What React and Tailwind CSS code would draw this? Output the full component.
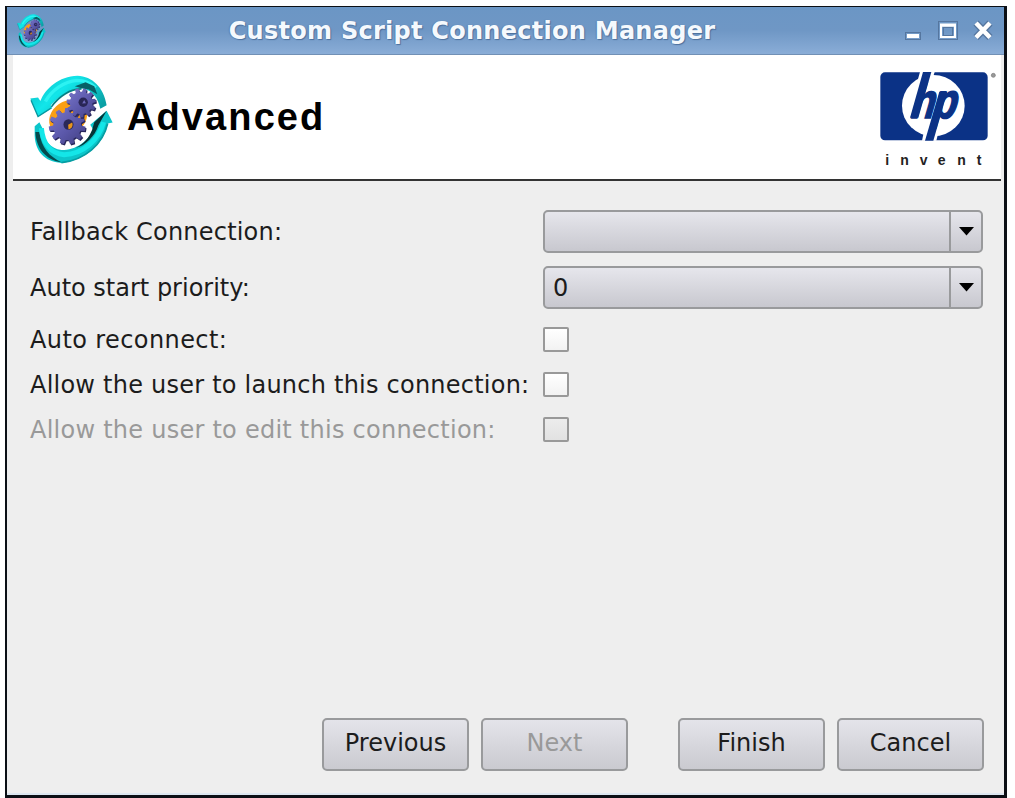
import { useState } from 'react';

const TEETH = 11;

// Outline of a cog wheel: every tooth takes four points on two radii
const gearPoints = (cx, cy, outer, inner, turn) => {
    const points = [];
    for (let i = 0; i < TEETH; i++) {
        [[-0.33, inner], [-0.2, outer], [0.2, outer], [0.33, inner]].forEach(([offset, radius]) => {
            const angle = ((i + offset) / TEETH) * Math.PI * 2 + turn;
            points.push(`${(cx + radius * Math.cos(angle)).toFixed(1)},${(cy + radius * Math.sin(angle)).toFixed(1)}`);
        });
    }
    return points.join(' ');
};

const GearsIcon = ({ className, prefix }) => (
    <svg className={className} viewBox="46 42 248 268" preserveAspectRatio="none" aria-hidden="true">
        <defs>
            <linearGradient id={`${prefix}-top`} x1="0" y1="0" x2="1" y2="0.6">
                <stop offset="0" stopColor="#08b4bc" />
                <stop offset="0.45" stopColor="#12e6ea" />
                <stop offset="0.75" stopColor="#0cc4c8" />
                <stop offset="1" stopColor="#0aa0a5" />
            </linearGradient>
            <linearGradient id={`${prefix}-gear`} x1="0" y1="0" x2="1" y2="1">
                <stop offset="0" stopColor="#7a78cc" />
                <stop offset="0.55" stopColor="#5b58aa" />
                <stop offset="1" stopColor="#413f80" />
            </linearGradient>
        </defs>

        {/* Upper arrow */}
        <path d="M47 113 L70 110 L77 120 C92 82 132 46 188 44 C232 46 266 78 275 133 L256 144 C250 112 232 90 204 82 C160 82 124 116 108 134 L112 141 L70 168 Z" fill={`url(#${prefix}-top)`} />
        <path d="M92 122 C110 88 148 61 186 58 C212 58 230 68 242 80" fill="none" stroke="#2df2f2" strokeWidth="10" />
        <path d="M110 138 C132 106 166 84 200 84" fill="none" stroke="#067f84" strokeWidth="5" />
        <path d="M180 76 L212 64 L238 76 L247 100 L222 86 L200 82 Z" fill="#076066" />
        <path d="M49 118 L70 167 L110 141" fill="none" stroke="#0897a0" strokeWidth="4" />

        {/* Lower arrow */}
        <path d="M60 196 L74 184 L84 204 C86 240 108 264 140 268 C184 268 222 240 234 205 L226 192 L275 150 L293 185 L278 188 C272 234 224 298 140 307 C88 304 62 270 60 226 Z" fill="#0cc5ca" />
        <path d="M62 214 C64 262 92 298 140 305 C104 288 80 262 74 214 Z" fill="#044a4d" />
        <path d="M80 202 C84 248 108 278 148 282 C204 280 250 240 266 184" fill="none" stroke="#14e6e8" strokeWidth="15" />
        <path d="M275 150 L238 184 L232 206 C222 232 206 250 182 262 C212 254 240 226 250 194 Z" fill="#053437" />
        <path d="M278 188 C264 250 210 298 140 306" fill="none" stroke="#079da2" strokeWidth="5" />

        <ellipse cx="160" cy="170" rx="60" ry="49" transform="rotate(-34 160 170)" fill="#fb9f14" />
        <polygon points={gearPoints(160, 200, 55, 42, 0.15)} fill="#29275c" />
        <polygon points={gearPoints(157, 196, 55, 42, 0.15)} fill={`url(#${prefix}-gear)`} />
        <ellipse cx="161" cy="191" rx="15" ry="16" fill="#2b2858" />
        <path d="M160 192 L172 185 C176 195 170 205 161 205 Z" fill="#e8951c" />
        <polygon points={gearPoints(202, 130, 44, 34, 0.4)} fill="#29275c" />
        <polygon points={gearPoints(199, 126, 44, 34, 0.4)} fill={`url(#${prefix}-gear)`} />
        <circle cx="205" cy="124" r="14" fill="#292656" />
        <path d="M202 128 L208 117 L213 127 Z" fill="#6e6abc" />
    </svg>
);

const HpLogo = () => (
    <svg className="h-[96px] w-[118px]" viewBox="60 36 354 288" role="img" aria-label="hp invent">
        <rect x="61" y="37" width="322" height="204" rx="14" fill="#0b3286" />
        <ellipse cx="220" cy="137" rx="94" ry="92" fill="#fff" />
        {/* Stems that run out to the edges of the plate */}
        <path d="M180 36 L224 36 L200 110 L159 110 Z" fill="#fff" />
        <path d="M200 175 L246 175 L229 242 L186 242 Z" fill="#fff" />
        <path d="M189 36 L214 36 L175 173 L150 173 Z" fill="#0b3286" />
        <path d="M238 95 L262 95 L220 242 L195 242 Z" fill="#0b3286" />
        <text
            transform="translate(146 173) skewX(-16) scale(0.8 1)"
            x="0 82"
            fill="#0b3286"
            stroke="#0b3286"
            strokeWidth="5"
            fontFamily="Liberation Sans, Arial, sans-serif"
            fontWeight="700"
            fontSize="148"
        >
            hp
        </text>
        <circle cx="400" cy="46" r="6" fill="#999" stroke="#777" strokeWidth="2" />
        <text y="314" x="76 121 179 233 292 350" fill="#222" fontFamily="Liberation Sans, Arial, sans-serif" fontWeight="700" fontSize="42">
            invent
        </text>
    </svg>
);

const TitleBar = () => (
    <header className="flex h-[48px] shrink-0 items-center border-b border-[#7190b5] bg-linear-to-b from-[#6b96c5] via-[#6f97c5] to-[#8aadd7] pr-[9px] pl-[10px]">
        <GearsIcon className="h-[34px] w-[29px]" prefix="small" />
        <h1 className="mr-[5px] flex-1 text-center text-[24px] leading-none font-bold tracking-[0.27px] text-[#f5f9fd] [text-shadow:1px_1px_1px_#4c6f9c,-1px_0_1px_#5d82af]">
            Custom Script Connection Manager
        </h1>
        <svg className="h-[24px] w-[92px]" viewBox="0 0 92 24" aria-hidden="true">
            <g fill="none" stroke="#55769f">
                <rect x="2.5" y="13.5" width="15" height="7" />
                <rect x="35.5" y="2.5" width="19" height="18" />
                <rect x="40.5" y="8.5" width="9" height="8" />
            </g>
            <rect x="4" y="15" width="12" height="4" fill="#fff" />
            <path d="M38 6.5 H52 M38 5 V18 H52 V5" fill="none" stroke="#fff" strokeWidth="2" />
            <path d="M37 6 H53" stroke="#fff" strokeWidth="3" />
            <path d="M73 4 L87 18.5 M87 4 L73 18.5" stroke="#55769f" strokeWidth="7" />
            <path d="M73 4 L87 18.5 M87 4 L73 18.5" stroke="#fff" strokeWidth="4.5" />
        </svg>
    </header>
);

const ComboBox = ({ label, value }) => (
    <button
        type="button"
        aria-label={label}
        className="flex h-[43px] w-[440px] rounded-[5px] border-2 border-[#999a9c] bg-linear-to-b from-[#e6e6ec] to-[#c8c8cf] text-left"
    >
        <span className="h-full flex-1 pl-2 leading-[40px]">{value}</span>
        <span className="flex h-full w-[32px] items-center justify-center border-l-2 border-[#999a9c]">
            <svg className="h-[9px] w-[15px]" viewBox="0 0 15 9" aria-hidden="true">
                <path d="M0 0 H15 L7.5 8.5 Z" fill="#000" />
            </svg>
        </span>
    </button>
);

const CheckBox = ({ label, checked, disabled, onChange }) => (
    <input
        type="checkbox"
        aria-label={label}
        checked={checked}
        disabled={disabled}
        onChange={onChange}
        className="block h-[25px] w-[26px] appearance-none rounded-[2px] border-2 border-[#999] bg-linear-to-b from-white to-[#f2f2f2] checked:from-[#8aadd7] disabled:from-[#ececec] disabled:to-[#e2e2e2]"
    />
);

const DialogButton = ({ children, disabled, className = '' }) => (
    <button
        type="button"
        disabled={disabled}
        className={`h-[53px] w-[147px] rounded-[5px] border-2 border-[#999a9c] bg-linear-to-b from-[#e4e4ea] to-[#cacad0] pb-[3px] leading-none disabled:text-[#999] ${className}`}
    >
        {children}
    </button>
);

const App = () => {
    const [autoReconnect, setAutoReconnect] = useState(false);
    const [allowLaunch, setAllowLaunch] = useState(false);

    return (
        <div className="h-[798px] w-[1015px] overflow-hidden bg-white pt-[6px] pl-[5px] font-['DejaVu_Sans',sans-serif] text-[24px] text-[#1c1c1c]">
            <div className="flex h-[792px] w-[1002px] flex-col border-t border-r-[3px] border-b-[3px] border-l-2 border-[#0b0f15]">
                <TitleBar />
                <div className="flex flex-1 flex-col border-b-2 border-[#dce6f0] bg-[#eee] pr-[3px] pl-[6px]">
                    <section className="flex h-[126px] shrink-0 items-start justify-between border-b-2 border-[#333] bg-white pr-[3px]">
                        <div className="flex items-center pt-[20px] pl-[17px]">
                            <GearsIcon className="h-[89px] w-[83px]" prefix="large" />
                            <h2 className="pb-[6px] pl-[14px] font-['Liberation_Sans',Arial,sans-serif] text-[38px] leading-none font-bold tracking-[2.1px] text-black">
                                Advanced
                            </h2>
                        </div>
                        <div className="pt-[17px]">
                            <HpLogo />
                        </div>
                    </section>

                    <form className="flex flex-1 flex-col pt-[29px] pl-[17px] leading-none">
                        <div className="grid grid-cols-[513px_440px] items-center gap-y-[13px]">
                            <span className="tracking-[0.2px]">Fallback Connection:</span>
                            <ComboBox label="Fallback Connection" value="" />
                            <span>Auto start priority:</span>
                            <ComboBox label="Auto start priority" value="0" />
                        </div>
                        <div className="mt-[18px] grid grid-cols-[513px_440px] items-center gap-y-[20px]">
                            <span className="tracking-[0.4px]">Auto reconnect:</span>
                            <CheckBox label="Auto reconnect" checked={autoReconnect} onChange={(e) => setAutoReconnect(e.target.checked)} />
                            <span className="tracking-[0.23px] whitespace-nowrap">Allow the user to launch this connection:</span>
                            <CheckBox label="Allow launch" checked={allowLaunch} onChange={(e) => setAllowLaunch(e.target.checked)} />
                            <span className="tracking-[0.25px] text-[#999]">Allow the user to edit this connection:</span>
                            <CheckBox label="Allow edit" checked={false} disabled />
                        </div>

                        <div className="mt-auto mb-[22px] flex justify-end gap-[12px] pr-[17px]">
                            <DialogButton>Previous</DialogButton>
                            <DialogButton disabled className="mr-[38px]">Next</DialogButton>
                            <DialogButton>Finish</DialogButton>
                            <DialogButton>Cancel</DialogButton>
                        </div>
                    </form>
                </div>
            </div>
        </div>
    );
};

export default App;
